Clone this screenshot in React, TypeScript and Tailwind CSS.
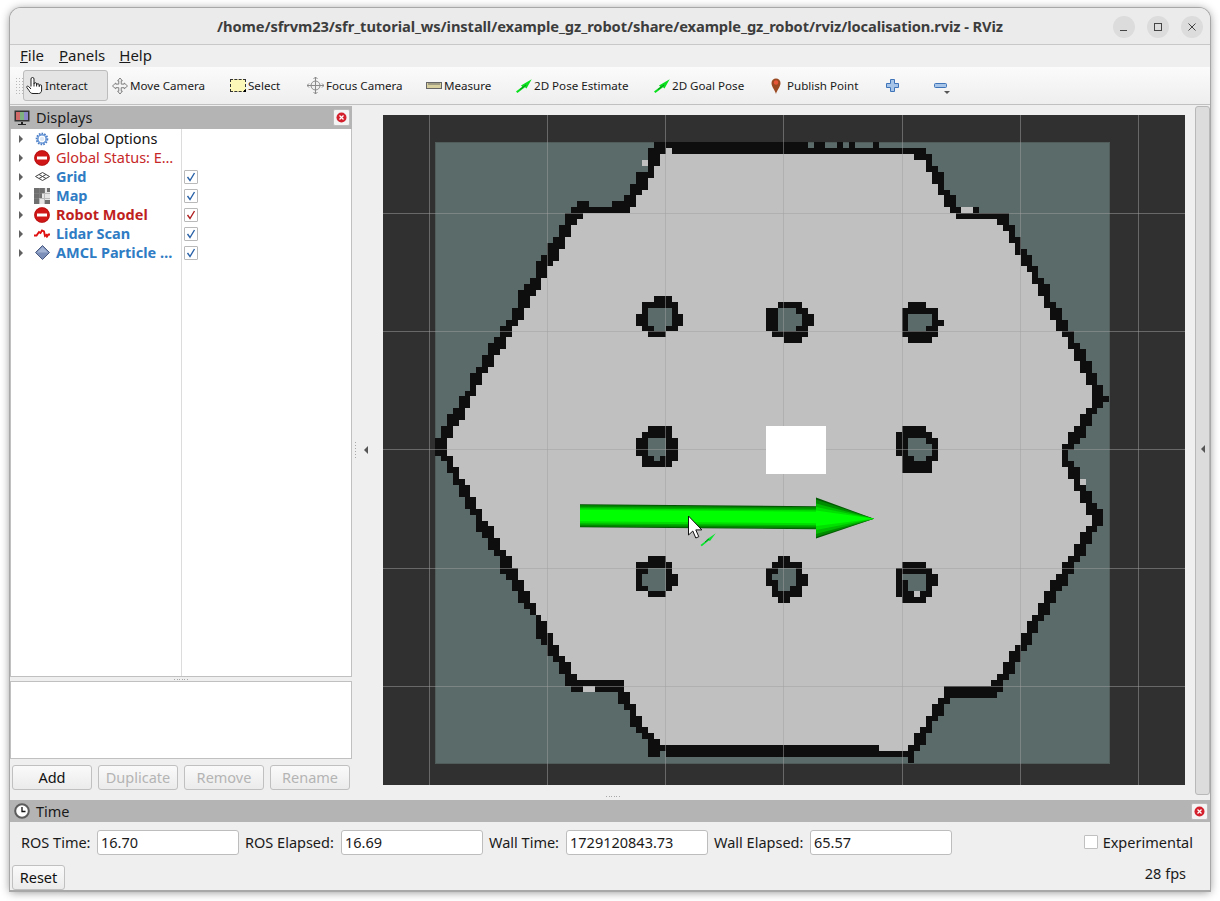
import React from "react";

const CW = 5.915, CH = 5.91, MX = 52, MY = 27.3;
const left: Record<number, number[]> = {
2:[36,38],3:[36,38],4:[36,37],5:[34,37],6:[34,36],7:[33,36],8:[33,35],9:[32,34],10:[24,26,30,34],11:[23,33],12:[22,25],13:[22,24],14:[21,23],15:[21,23],16:[20,22],17:[19,22],18:[19,21],19:[18,21],20:[17,20],21:[17,19],22:[17,19],23:[16,18],24:[15,18],25:[14,17],26:[14,16],27:[14,16],28:[13,15],29:[13,15],30:[12,14],31:[11,13],32:[11,13],33:[10,12],34:[9,12],35:[9,11],36:[8,10],37:[8,10],38:[7,9],39:[6,8],40:[6,8],41:[6,7],42:[5,7],43:[4,6],44:[4,6],45:[3,5],46:[2,5],47:[2,4],48:[1,3],49:[1,3],50:[0,2],51:[0,2],52:[0,2],53:[1,3],54:[2,3],55:[2,4],56:[3,4],57:[3,5],58:[4,6],59:[4,6],60:[5,7],61:[5,7],62:[6,8],63:[7,8],64:[7,9],65:[7,10],66:[8,10],67:[9,11],68:[9,11],69:[10,12],70:[11,13],71:[11,13],72:[11,14],73:[12,14],74:[13,15],75:[13,15],76:[14,16],77:[14,16],78:[15,17],79:[16,17],80:[17,18],81:[17,19],82:[17,19],83:[17,20],84:[18,20],85:[19,21],86:[19,21],87:[20,22],88:[21,23],89:[21,23],90:[22,24],91:[22,32],92:[23,25,27,32],93:[31,33],94:[31,33],95:[32,34],96:[33,34],97:[33,35],98:[33,35],99:[34,36],100:[35,37],101:[36,38],102:[36,75],
};
const right: Record<number, number[]> = {
2:[81,84],3:[83,84],4:[83,85],5:[84,86],6:[84,86],7:[85,86],8:[85,87],9:[86,88],10:[86,88],11:[87,89,91,92],12:[88,97],13:[95,97],14:[96,98],15:[97,98],16:[97,99],17:[98,99],18:[98,100],19:[99,101],20:[99,101],21:[100,102],22:[101,102],23:[101,103],24:[102,104],25:[102,104],26:[103,104],27:[103,105],28:[104,106],29:[104,106],30:[105,107],31:[105,107],32:[106,108],33:[107,108],34:[107,109],35:[108,110],36:[108,110],37:[109,111],38:[109,111],39:[110,112],40:[110,112],41:[111,113],42:[111,113],43:[111,114],44:[111,113],45:[110,112],46:[109,111],47:[109,111],48:[108,110],49:[107,110],50:[107,109],51:[106,108],52:[106,107],53:[106,107],54:[106,108],55:[107,109],56:[107,109],57:[108,109],58:[108,110],59:[109,111],60:[109,111],61:[110,112],62:[110,113],63:[111,113],64:[111,113],65:[110,112],66:[109,111],67:[109,111],68:[108,110],69:[108,110],70:[107,109],71:[106,108],72:[106,108],73:[105,107],74:[104,107],75:[104,106],76:[103,105],77:[103,105],78:[102,104],79:[102,104],80:[101,103],81:[100,102],82:[100,102],83:[99,101],84:[99,101],85:[98,100],86:[97,99],87:[97,99],88:[96,98],89:[96,98],90:[95,97],91:[94,96],92:[86,96],93:[86,95],94:[85,87],95:[84,86],96:[84,86],97:[83,85],98:[83,84],99:[82,84],100:[81,83],101:[81,83],102:[80,82],
};
const extraWalls: number[][] = [
  [0,37,63],[0,64,66],[0,68,69],[0,70,71],[0,74,75],[1,36,39],[1,40,83],[103,36,38],[103,39,81],[104,80,81],
];
const freeCells: number[][] = [[3,35],[1,39],[11,89],[11,90],[92,25],[92,26],[57,109],[76,81]];
const obstacles: Record<number, number[]>[] = [
  {26:[37,40],27:[35,41],28:[35,36,40,41],29:[34,36,40,42],30:[34,36,40,42],31:[35,37,39,41],32:[36,39]},
  {27:[58,62],28:[56,58,61,63],29:[56,58,62,64],30:[56,58,62,64],31:[56,58,61,63],32:[57,63],33:[59,62]},
  {27:[80,83],28:[79,85],29:[79,80,84,85],30:[79,80,84,86],31:[79,80,83,85],32:[79,85],33:[80,84]},
  {48:[36,40],49:[35,40],50:[34,36,39,41],51:[34,36,39,41],52:[34,36,39,41],53:[35,37,38,41],54:[35,40]},
  {48:[79,83],49:[78,84],50:[78,80,83,85],51:[78,80,84,85],52:[78,80,84,85],53:[79,81,83,85],54:[79,84],55:[79,84]},
  {70:[36,39],71:[34,40],72:[34,36,39,40],73:[34,35,39,41],74:[34,35,39,41],75:[34,36,39,40],76:[36,39]},
  {70:[58,60],71:[57,62],72:[56,58,61,62],73:[56,57,61,63],74:[56,58,61,63],75:[57,58,60,62],76:[57,62],77:[58,60]},
  {71:[79,83],72:[78,84],73:[78,79,83,85],74:[78,80,83,85],75:[78,80,83,84],76:[78,81,82,84],77:[79,83]},
];

const TEAL = "#5a6b69", FREE = "#c0c0c0", WALL = "#0e0e0e";
function cell(r: number, a: number, b: number, fill: string, key: string) {
  const x = Math.round(MX + a * CW), x2 = Math.round(MX + b * CW);
  const y = Math.round(MY + r * CH), y2 = Math.round(MY + (r + 1) * CH);
  return <rect key={key} x={x} y={y} width={x2 - x} height={y2 - y} fill={fill} />;
}

const bodyBands: [number, number, string][] = [
  [0, 23, "#004f00"], [0.8, 22.2, "#008800"], [2.5, 20.5, "#00b000"], [4, 19, "#00dc00"], [5.5, 17, "#00ff00"],
];

function MapView() {
  const items: React.ReactNode[] = [];
  for (let r = 2; r <= 102; r++) {
    const l = left[r], rr = right[r];
    const a = r === 102 ? 75 : l[l.length - 1];
    items.push(cell(r, a, rr[0], FREE, `f${r}`));
  }
  freeCells.forEach(([r, c]) => items.push(cell(r, c, c + 1, FREE, `c${r}-${c}`)));
  [left, right].forEach((set, si) => {
    Object.entries(set).forEach(([k, v]) => {
      for (let i = 0; i < v.length; i += 2) items.push(cell(+k, v[i], v[i + 1], WALL, `w${si}-${k}-${i}`));
    });
  });
  extraWalls.forEach(([r, a, b], i) => items.push(cell(r, a, b, WALL, `e${i}`)));
  obstacles.forEach((o, oi) => {
    Object.entries(o).forEach(([k, v]) => {
      if (v.length === 4) items.push(cell(+k, v[1], v[2], +k === 76 && oi === 7 ? FREE : TEAL, `t${oi}-${k}`));
      for (let i = 0; i < v.length; i += 2) items.push(cell(+k, v[i], v[i + 1], WALL, `o${oi}-${k}-${i}`));
    });
  });
  const vx = [46.5, 164.5, 282.5, 400.5, 519.5, 637.5, 755.5];
  const hy = [98.5, 216.5, 334.5, 453.5, 571.5];
  return (
    <svg width="802" height="670" viewBox="0 0 802 670" className="block">
      <rect width="802" height="670" fill="#303030" />
      <rect x="52.500" y="27.500" width="674" height="621" fill={TEAL} stroke="#4f5c5a" strokeWidth="1" />
      <g shapeRendering="crispEdges">{items}</g>
      <g stroke="#a0a0a0" strokeOpacity="0.5" strokeWidth="1" shapeRendering="crispEdges">
        {vx.map((x) => <line key={x} x1={x} x2={x} y1="0" y2="670" />)}
        {hy.map((y) => <line key={y} x1="0" x2="802" y1={y} y2={y} />)}
      </g>
      <path d="M383 311h60v48h-60z" fill="#ffffff" shapeRendering="crispEdges" />
      {/* large arrow */}
      {bodyBands.map(([a, b, c]) => (
        <polygon key={c} points={`197,${389.3 + a} 433,${391.3 + a} 433,${391.3 + b} 197,${389.3 + b}`} fill={c} />
      ))}
      <polygon points="433,382.500 491,403.700 433,423.500" fill="#005a00" />
      <polygon points="433,384.500 491,403.700 433,422" fill="#008c00" />
      <polygon points="433,388.500 491,403.700 433,419" fill="#00bc00" />
      <polygon points="433,392 491,403.700 433,415" fill="#00e000" />
      <polygon points="433,395.500 491,403.700 433,411" fill="#00ff00" />
      {/* small arrow */}
      <polygon points="317.500,430 323.300,425.500 324,424.200 332.800,418.300 327,426 325.800,425.500 318.800,431.300" fill="#0ae62e" />
      <line x1="322" y1="427" x2="326" y2="424" stroke="#08801c" strokeWidth="1" />
      {/* mouse cursor */}
      <path d="M305.500 401v19l4.300-4 3 7 3-1.300-3-6.800h6z" fill="#fff" stroke="#111" strokeWidth="1" strokeLinejoin="round" />
    </svg>
  );
}

const Green = () => (
  <svg width="16" height="14" viewBox="0 0 16 14" className="shrink-0">
    <path d="M0 12.500 6.200 7.800 5 6.500 15.700.3 10.500 9.500 9 8.200 1.400 14z" fill="#0be01f" />
    <path d="M4 10.500 10 6" stroke="#08861b" strokeWidth="1" />
  </svg>
);
const Hand = () => (
  <svg width="17" height="17" viewBox="0 0 17 17" fill="#fff" stroke="#222" strokeWidth="1" className="shrink-0">
    <path d="M5 9.500V2a1.500 1.500 0 0 1 3 0V7a1.300 1.300 0 0 1 2.600 0v1a1.300 1.300 0 0 1 2.600 0v1a1.200 1.200 0 0 1 2.400 0v4c0 2-1 3.500-3 3.500H7c-2 0-3-1-4-3L.8 10.500c-.5-1.200 1-2 1.800-1L5 12" />
    <path d="M8 7v2.500M10.600 8v1.500M13.200 9v1" fill="none" />
  </svg>
);
const MoveIcon = () => (
  <svg width="16" height="18" viewBox="0 0 17 18" fill="#f4f4f4" stroke="#777" strokeWidth="1" className="shrink-0">
    <path d="M8.500.5 11 3.500H9.800V7H13V5.800L16.500 9 13 12V10.800H9.800V14.500H11L8.500 17.500 6 14.500H7.200V10.800H4V12L.5 9 4 5.800V7H7.200V3.500H6z" />
  </svg>
);
const Focus = () => (
  <svg width="17" height="17" viewBox="0 0 17 17" fill="none" stroke="#8a8a8a" strokeWidth="1" className="shrink-0">
    <circle cx="8.500" cy="8.500" r="4.500" fill="#eee" />
    <path d="M8.500 0v17M0 8.500h17" />
    <path d="M6.500 2 8.500 0l2 2M6.500 15l2 2 2-2M2 6.500l-2 2 2 2M15 6.500l2 2-2 2" />
  </svg>
);
const SelectI = () => (
  <span className="w-4 h-[13px] bg-[#fdf8b8] border border-dashed border-[#333] relative shrink-0">
    <span className="absolute right-[-1px] bottom-[-1px] w-0.5 h-0.5 bg-black" />
  </span>
);
const Ruler = () => (
  <svg width="16" height="7" viewBox="0 0 16 7" className="shrink-0">
    <rect x=".5" y=".5" width="15" height="6" fill="#d8cf9e" stroke="#666" />
    <path d="M3 1v2M5 1v2M7 1v2M9 1v2M11 1v2M13 1v2" stroke="#666" />
  </svg>
);
const Pin = () => (
  <svg width="10" height="16" viewBox="0 0 10 16" className="shrink-0 mr-[4px]">
    <path d="M5 16C4 12 .5 9 .5 5a4.500 4.500 0 0 1 9 0C9.500 9 6 12 5 16z" fill="#9a4a22" />
    <circle cx="5" cy="4.500" r="2.200" fill="#e8563a" />
  </svg>
);
const Plus = () => (
  <svg width="13" height="13" viewBox="0 0 13 13" className="shrink-0">
    <path d="M4.500.5h4v4h4v4h-4v4h-4v-4h-4v-4h4z" fill="#a6c4e8" stroke="#3f74b8" />
  </svg>
);
const Minus = () => (
  <svg width="13" height="5" viewBox="0 0 13 5" className="shrink-0">
    <rect x=".5" y=".5" width="12" height="4" rx="1" fill="#a6c4e8" stroke="#3f74b8" />
  </svg>
);

function CloseBtn() {
  return (
    <span className="w-[17px] h-[17px] bg-[#f4f4f4] border border-[#bdbdbd] rounded-[2px] flex items-center justify-center shrink-0">
      <svg width="11" height="11" viewBox="0 0 11 11">
        <circle cx="5.500" cy="5.500" r="5" fill="#d3202c" />
        <path d="M3.500 3.500l4 4M7.500 3.500l-4 4" stroke="#fff" strokeWidth="1.300" />
      </svg>
    </span>
  );
}

const NoEntry = () => (
  <svg width="16" height="16" viewBox="0 0 16 16">
    <circle cx="8" cy="8" r="7.800" fill="#d01616" />
    <circle cx="8" cy="8" r="7.300" fill="none" stroke="#a81010" strokeWidth=".6" />
    <rect x="3" y="6.500" width="10" height="3" fill="#fff" />
  </svg>
);
const Gear = () => (
  <svg width="14" height="14" viewBox="0 0 14 14">
    <circle cx="7" cy="7" r="5" fill="none" stroke="#4a7cc4" strokeWidth="2.600" strokeDasharray="1.500 1" />
    <circle cx="7" cy="7" r="4.200" fill="none" stroke="#6d9ad8" strokeWidth="1.500" />
    <circle cx="7" cy="7" r="2.200" fill="#dfe9f6" />
  </svg>
);
const GridI = () => (
  <svg width="15" height="9" viewBox="0 0 15 9" fill="none" stroke="#444" strokeWidth="1">
    <path d="M7.500.5 14.500 4.500 7.500 8.500.5 4.500z" />
    <path d="M4 2.500l7 4M11 2.500l-7 4" />
  </svg>
);
const MapI = () => (
  <svg width="16" height="16" viewBox="0 0 16 16" shapeRendering="crispEdges">
    <rect width="16" height="16" fill="#e6e6e6" />
    <path d="M0 0h11v5H8v5H5v6H0zM13 0h3v4h-3zM11 12h5v4h-5z" fill="#6f6f6f" />
    <path d="M5 0v16M10 0v16M0 5h16M0 10h16" stroke="#8c8c8c" strokeOpacity=".5" />
  </svg>
);
const Lidar = () => (
  <svg width="16" height="9" viewBox="0 0 16 9" fill="none" stroke="#e01010" strokeWidth="1.900">
    <path d="M0 6.500h2.500L5 3l1.500 1L8 1.500 10 2.500 11 7l1.500-1L13 7.500 14.500 5.500H16" />
  </svg>
);
const Particle = () => (
  <svg width="15" height="15" viewBox="0 0 15 15">
    <path d="M7.500 .5 14.500 7.500 7.500 14.500 .5 7.500z" fill="#7c8fb8" stroke="#4a5a80" />
    <path d="M7.500 2 13 7.500H2z" fill="#a4b4d4" />
  </svg>
);
const DisplaysIcon = () => (
  <svg width="16" height="16" viewBox="0 0 16 16" className="shrink-0">
    <rect x=".5" y=".5" width="15" height="11" fill="#333" />
    <rect x="2" y="2" width="4" height="8" fill="#d26a6a" />
    <rect x="6" y="2" width="4" height="8" fill="#7fb07f" />
    <rect x="10" y="2" width="4" height="8" fill="#8a86c8" />
    <path d="M7 12h2v2h3v1H4v-1h3z" fill="#222" />
  </svg>
);
const Clock = () => (
  <svg width="16" height="16" viewBox="0 0 16 16" className="shrink-0">
    <circle cx="8" cy="8" r="6.800" fill="#fff" stroke="#5c5c5c" strokeWidth="2" />
    <path d="M8 4v4.500h3.500" fill="none" stroke="#111" strokeWidth="1.300" />
  </svg>
);

const Check = ({ red }: { red?: boolean }) => (
  <span className="w-[14px] h-[14px] bg-white border border-[#b9b9b9] rounded-[1px] flex items-center justify-center">
    <svg width="10" height="10" viewBox="0 0 10 10" fill="none" stroke={red ? "#b02020" : "#2a62a8"} strokeWidth="1.400">
      <path d="M1.500 5 4 8.500 8.500 1" />
    </svg>
  </span>
);

const rows: { icon: React.ReactNode; label: string; cls: string; check?: "b" | "r" }[] = [
  { icon: <Gear />, label: "Global Options", cls: "text-[#111]" },
  { icon: <NoEntry />, label: "Global Status: E…", cls: "text-[#c62828]" },
  { icon: <GridI />, label: "Grid", cls: "text-[#2f7cc4] font-bold", check: "b" },
  { icon: <MapI />, label: "Map", cls: "text-[#2f7cc4] font-bold", check: "b" },
  { icon: <NoEntry />, label: "Robot Model", cls: "text-[#c01f1f] font-bold", check: "r" },
  { icon: <Lidar />, label: "Lidar Scan", cls: "text-[#2f7cc4] font-bold", check: "b" },
  { icon: <Particle />, label: "AMCL Particle …", cls: "text-[#2f7cc4] font-bold", check: "b" },
];

const Tool = ({ icon, label, w, active }: { icon: React.ReactNode; label: string; w: string; active?: boolean }) => (
  <div className={`${w} h-[31px] flex items-center gap-[2px] rounded-[3px] border shrink-0 ${active ? "bg-[#e4e4e4] border-[#bcbcbc] pl-[2px]" : "border-transparent pl-[3px]"}`}>
    {icon}
    <span className="whitespace-nowrap">{label}</span>
  </div>
);

const Btn = ({ children, w, disabled }: { children: React.ReactNode; w: string; disabled?: boolean }) => (
  <div className={`${w} h-[25px] flex items-center justify-center rounded-[3px] border border-[#c0c0c0] bg-gradient-to-b from-[#fafafa] to-[#ebebeb] ${disabled ? "text-[#b4b4b4]" : "text-[#111]"}`}>{children}</div>
);

const Field = ({ label, value, w }: { label: string; value: string; w: string }) => (
  <>
    <span className={`${w} whitespace-nowrap shrink-0`}>{label}</span>
    <span className="w-[142px] h-[25px] bg-white border border-[#bdbdbd] rounded-[3px] pl-[3px] mr-[6px] flex items-center shrink-0">{value}</span>
  </>
);

const Dots = () => (
  <div className="flex gap-[1.500px]">
    {[0, 1, 2, 3, 4, 5].map((i) => <span key={i} className="w-px h-px bg-[#a8a8a8]" />)}
  </div>
);

export default function App() {
  return (
    <div className="w-[1220px] h-[901px] bg-white pl-[10px] pr-[10px] pt-[8px] font-['Noto_Sans',sans-serif] text-[14.5px] leading-none text-[#1a1a1a] overflow-hidden">
      <div className="w-[1200px] h-[883px] flex flex-col bg-[#efefef] rounded-t-[11px] shadow-[0_0_0_1px_#a8a8a8,0_1px_10px_rgba(0,0,0,0.45)] overflow-hidden">
        {/* title */}
        <div className="h-[37px] shrink-0 bg-[#ebebeb] border-b border-[#c8c8c8] flex items-center relative">
          <div className="flex-1 text-center font-bold text-[14.7px] text-[#3d3d3d] whitespace-nowrap tracking-[-0.1px]">
            /home/sfrvm23/sfr_tutorial_ws/install/example_gz_robot/share/example_gz_robot/rviz/localisation.rviz - RViz
          </div>
          <div className="absolute right-[7px] top-[8px] flex gap-[12px]">
            {["min", "max", "close"].map((k) => (
              <span key={k} className="w-[22px] h-[22px] rounded-full bg-[#dcdcdc] flex items-center justify-center">
                <svg width="12" height="12" viewBox="0 0 12 12" fill="none" stroke="#444" strokeWidth="1">
                  {k === "min" && <path d="M2 9.500h7" />}
                  {k === "max" && <rect x="2.500" y="2.500" width="7" height="7" />}
                  {k === "close" && <path d="M2.500 2.500l7 7M9.500 2.500l-7 7" />}
                </svg>
              </span>
            ))}
          </div>
        </div>
        {/* menu */}
        <div className="h-[22px] shrink-0 bg-[#efefef] flex items-center pl-[10px] pb-[2px] gap-[14px] text-[15px]">
          <span><u>F</u>ile</span>
          <span className="ml-px"><u>P</u>anels</span>
          <span><u>H</u>elp</span>
        </div>
        {/* toolbar */}
        <div className="h-[38px] shrink-0 bg-gradient-to-b from-[#fbfbfb] to-[#eeeeee] border-b border-[#c0c0c0] flex items-center pl-[5px] text-[11.6px]">
          <div className="w-[8px] h-[17px] shrink-0 bg-[radial-gradient(#b8b8b8_0.6px,transparent_0.8px)] bg-[length:3px_3px]" />
          <Tool active w="w-[85px]" icon={<Hand />} label="Interact" />
          <Tool w="w-[118px]" icon={<MoveIcon />} label="Move Camera" />
          <Tool w="w-[77px]" icon={<SelectI />} label="Select" />
          <Tool w="w-[119px]" icon={<Focus />} label="Focus Camera" />
          <Tool w="w-[90px]" icon={<Ruler />} label="Measure" />
          <Tool w="w-[138px]" icon={<Green />} label="2D Pose Estimate" />
          <Tool w="w-[117px]" icon={<Green />} label="2D Goal Pose" />
          <Tool w="w-[113px]" icon={<Pin />} label="Publish Point" />
          <div className="w-[24px] flex items-center justify-center shrink-0"><Plus /></div>
          <div className="w-[24px] ml-[24px] flex items-center justify-center relative shrink-0">
            <Minus />
            <span className="absolute left-[16px] top-[8px] border-x-[3px] border-x-transparent border-t-[3px] border-t-[#555]" />
          </div>
        </div>
        {/* main */}
        <div className="flex-1 flex min-h-0">
          <div className="w-[342px] flex flex-col pt-px shrink-0">
            <div className="h-[23px] bg-[#b4b4b4] flex items-center pl-[4px] pr-[2px] gap-[6px] shrink-0">
              <DisplaysIcon />
              <span className="flex-1">Displays</span>
              <CloseBtn />
            </div>
            <div className="h-[548px] bg-white border-x border-b border-[#c0c0c0] flex shrink-0 relative">
              <div className="w-[171px] border-r border-[#dcdcdc]">
                {rows.map((r) => (
                  <div key={r.label} className="h-[19px] flex items-center whitespace-nowrap overflow-hidden">
                    <span className="w-[8px] shrink-0" />
                    <span className="border-y-[4px] border-y-transparent border-l-[4px] border-l-[#606060] shrink-0" />
                    <span className="w-[22px] ml-[8px] flex justify-center shrink-0">{r.icon}</span>
                    <span className={`ml-[3px] ${r.cls}`}>{r.label}</span>
                  </div>
                ))}
              </div>
              <div className="pl-[2px]">
                {rows.map((r) => (
                  <div key={r.label} className="h-[19px] flex items-center">
                    {r.check && <Check red={r.check === "r"} />}
                  </div>
                ))}
              </div>
            </div>
            <div className="h-[4px] flex justify-center items-center shrink-0"><Dots /></div>
            <div className="h-[78px] bg-white border border-[#c0c0c0] shrink-0" />
            <div className="flex gap-[6px] pl-[2px] pt-[6px]">
              <Btn w="w-[80px]">Add</Btn>
              <Btn w="w-[80px]" disabled>Duplicate</Btn>
              <Btn w="w-[80px]" disabled>Remove</Btn>
              <Btn w="w-[80px]" disabled>Rename</Btn>
            </div>
          </div>
          {/* left splitter */}
          <div className="w-[31px] flex items-center shrink-0 pl-[3px] pb-[5px] gap-[8px]">
            <div className="flex flex-col gap-[2px]">
              {[0, 1, 2, 3, 4, 5].map((i) => <span key={i} className="w-px h-px bg-[#a8a8a8]" />)}
            </div>
            <span className="border-y-[4px] border-y-transparent border-r-[4px] border-r-[#555]" />
          </div>
          <div className="w-[802px] flex flex-col items-start pt-[10px] shrink-0">
            <MapView />
            <div className="pt-[11px] pl-[223px]"><Dots /></div>
          </div>
          {/* right splitter */}
          <div className="ml-[10px] w-[15px] h-[689px] mt-px bg-[#dcdcdc] border border-[#b8b8b8] rounded-[3px] flex items-center justify-center shrink-0 pb-[4px]">
            <span className="border-y-[4px] border-y-transparent border-r-[4px] border-r-[#555]" />
          </div>
        </div>
        {/* time */}
        <div className="h-[91px] shrink-0 flex flex-col border-b border-[#a8a8a8]">
          <div className="h-[22px] bg-[#b4b4b4] flex items-center pl-[4px] pr-[2px] gap-[6px] shrink-0">
            <Clock />
            <span className="flex-1">Time</span>
            <CloseBtn />
          </div>
          <div className="h-[40px] flex items-center pl-[11px] pr-[17px] shrink-0">
            <Field w="w-[76px]" label="ROS Time:" value="16.70" />
            <Field w="w-[96px]" label="ROS Elapsed:" value="16.69" />
            <Field w="w-[77px]" label="Wall Time:" value="1729120843.73" />
            <Field w="w-[96px]" label="Wall Elapsed:" value="65.57" />
            <span className="flex-1" />
            <span className="w-[14px] h-[14px] bg-white border border-[#c0c0c0] rounded-[1px] mr-[5px]" />
            <span>Experimental</span>
          </div>
          <div className="flex items-start pl-[2px] pr-[24px] justify-between mt-[3px]">
            <Btn w="w-[53px]">Reset</Btn>
            <span className="pt-[1px]">28 fps</span>
          </div>
        </div>
      </div>
    </div>
  );
}
